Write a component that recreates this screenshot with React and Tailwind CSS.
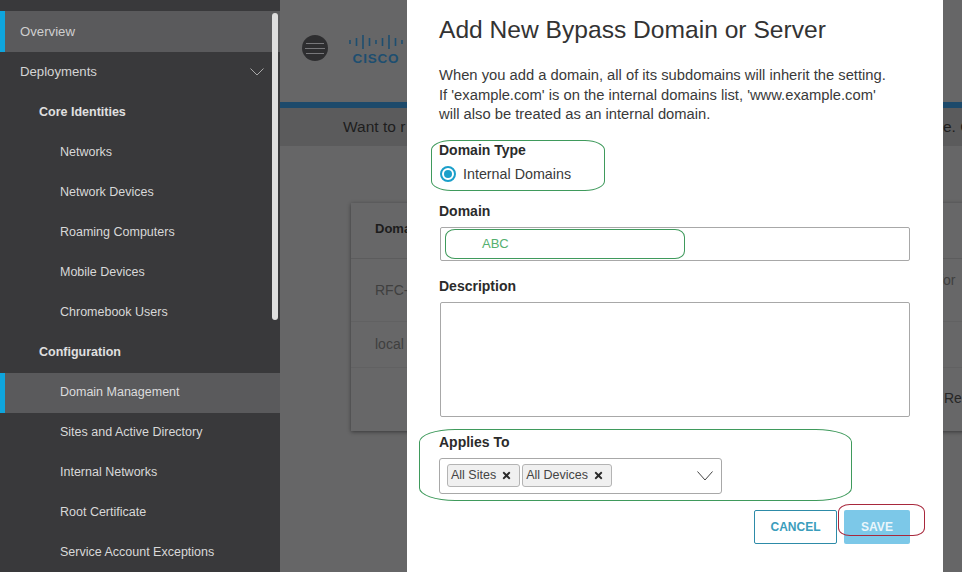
import { FaTimes } from 'react-icons/fa'

const font = { sans: 'font-["Liberation_Sans",Arial,sans-serif]' }

const configItems = ['Sites and Active Directory', 'Internal Networks', 'Root Certificate', 'Service Account Exceptions']
const identityItems = ['Networks', 'Network Devices', 'Roaming Computers', 'Mobile Devices', 'Chromebook Users']

function SubItem({ children }) {
  return <div className="flex h-10 items-center pl-[60px] text-[12.5px] text-[#d8d8d8]">{children}</div>
}

function GroupTitle({ children }) {
  return <div className="flex h-10 items-center pl-[39px] text-[12.5px] font-bold text-[#e0e0e0]">{children}</div>
}

function Sidebar() {
  return (
    <aside className="relative h-full w-[280px] shrink-0 overflow-hidden bg-[#39393b] pt-[11px]">
      <div className="flex h-[41px] items-center border-l-[5px] border-[#0ea5dd] bg-[#5a5a5c] pl-[15px] text-[13.2px] text-[#cfcfcf]">Overview</div>
      <div className="flex h-10 items-center justify-between pl-5 pr-[16px] text-[13.2px] text-[#d4d4d4]">
        <span>Deployments</span>
        <svg width="14" height="8" viewBox="0 0 14 8" fill="none" stroke="#a8a8a8" strokeWidth="1">
          <path d="M0.5 0.5 7 7 13.5 0.5" />
        </svg>
      </div>
      <GroupTitle>Core Identities</GroupTitle>
      {identityItems.map(i => <SubItem key={i}>{i}</SubItem>)}
      <GroupTitle>Configuration</GroupTitle>
      <div className="mb-[-1px] mt-px flex h-10 items-center border-l-[5px] border-[#0ea5dd] bg-[#5a5a5c] pb-[2px] pl-[55px] text-[12.5px] text-[#dcdcdc]">Domain Management</div>
      {configItems.map(i => <SubItem key={i}>{i}</SubItem>)}
      {/* scrollbar */}
      <div className="absolute left-[272px] top-[13px] h-[307px] w-[6px] rounded-full bg-[#dedede]" />
    </aside>
  )
}

function CiscoLogo() {
  const bars = [4, 8, 14, 8, 4, 8, 14, 8, 4]
  return (
    <div className="flex w-[56px] flex-col items-center">
      <svg width="56" height="14" viewBox="0 0 56 14" stroke="#1d4e70" strokeWidth="1.6">
        {bars.map((h, i) => <line key={i} x1={2 + i * 6.5} x2={2 + i * 6.5} y1={7 - h / 2} y2={7 + h / 2} />)}
      </svg>
      <span className="mt-[3px] text-[13.5px] font-bold leading-[13px] tracking-[0.8px] text-[#1d4e70]">CISCO</span>
    </div>
  )
}

function MainBackdrop() {
  return (
    <main className="h-full min-w-0 flex-1 overflow-hidden bg-[#666667]">
      <div className="flex h-[102px] items-start pl-[22px] pt-[35px]">
        <div className="flex h-[26px] w-[26px] flex-col items-center justify-center gap-[4px] rounded-full bg-[#2e2e30]">
          <span className="h-px w-[18px] bg-[#77777a]" />
          <span className="h-px w-[20px] bg-[#77777a]" />
          <span className="h-px w-[18px] bg-[#77777a]" />
        </div>
        <div className="ml-[20px]"><CiscoLogo /></div>
      </div>
      <div className="h-[6px] bg-[#1d4a6b]" />
      <div className="flex h-[38px] w-[700px] items-center bg-[#5b5b5c] pl-[63px] text-[15.5px] text-[#1e1e1e]">
        <span className="w-[600px] shrink-0">Want to r</span>
        <span className="shrink-0">e. C</span>
      </div>
      <div className="ml-[71px] mt-[57px] h-[228px] w-[700px] bg-[#676768] shadow-[0_1px_4px_rgba(0,0,0,0.45)]">
        <div className="flex h-[56px] items-center border-b border-[#5c5c5d] pb-[4px] pl-6 text-[13px] font-bold text-[#1c1c1c]">Domain</div>
        <div className="flex h-[63px] items-center border-b border-[#616162] pl-6 text-[14px] text-[#3f3f3f]">
          <span className="w-[564px] shrink-0">RFC-1918</span>
          <span className="mb-[19px]">for</span>
        </div>
        <div className="flex h-[46px] items-center border-b border-[#616162] pl-6 text-[14px] text-[#3f3f3f]">local</div>
        <div className="flex h-[62px] items-center pb-[2px] pl-[593px] text-[14px] text-[#262626]">Re</div>
      </div>
    </main>
  )
}

function FieldLabel({ children, className = '' }) {
  return <div className={`text-[14px] font-bold leading-[18px] text-[#2b2b2b] ${className}`}>{children}</div>
}

function Chip({ label }) {
  return (
    <span className="flex h-[23px] items-center gap-[5px] rounded-[3px] border border-[#b4b4b4] bg-[#f0f0f0] pl-[3px] pr-[7px] text-[12.5px] text-[#444]">
      {label}
      <FaTimes size={11} className="text-[#2b2b2b]" />
    </span>
  )
}

function Modal() {
  return (
    <div className="absolute left-[407px] top-0 h-[572px] w-[536px] overflow-hidden bg-white pl-[32px] pr-[33px] pt-[15px] text-[#333]">
      <h1 className="text-[24.6px] font-normal leading-[30px] text-[#333]">Add New Bypass Domain or Server</h1>
      <p className="mt-[21px] text-[14.75px] leading-[19.5px] text-[#3a3a3a]">
        When you add a domain, all of its subdomains will inherit the setting.<br />
        If 'example.com' is on the internal domains list, 'www.example.com'<br />
        will also be treated as an internal domain.
      </p>

      <FieldLabel className="mt-[16px]">Domain Type</FieldLabel>
      <div className="mt-[6px] flex h-[18px] items-center">
        <span className="ml-px flex h-4 w-4 items-center justify-center rounded-full border-2 border-[#1b9fca] bg-white">
          <span className="h-2 w-2 rounded-full bg-[#1b9fca]" />
        </span>
        <span className="ml-[7px] mt-[2px] text-[14.3px] text-[#3a3a3a]">Internal Domains</span>
      </div>

      <FieldLabel className="mt-[19px]">Domain</FieldLabel>
      <div className="ml-px mt-[7px] flex h-[34px] items-center rounded-[2px] border border-[#a8a8a8] pl-[41px] text-[13px] text-[#55b06f]">ABC</div>

      <FieldLabel className="mt-[16px]">Description</FieldLabel>
      <div className="ml-px mt-[7px] h-[115px] rounded-[2px] border border-[#a8a8a8]" />

      <FieldLabel className="mt-[16px]">Applies To</FieldLabel>
      <div className="mt-[7px] flex h-[36px] w-[283px] items-center gap-[2px] rounded-[3px] border border-[#a8a8a8] pl-[7px] pr-[8px]">
        <Chip label="All Sites" />
        <Chip label="All Devices" />
        <svg className="ml-auto" width="16" height="10" viewBox="0 0 16 10" fill="none" stroke="#444" strokeWidth="1">
          <path d="M0.5 0.5 8 9 15.5 0.5" />
        </svg>
      </div>

      <div className="mt-[16px] flex justify-end gap-[7px]">
        <button className="h-[34px] w-[83px] rounded-[2px] border border-[#2d8ba8] bg-white text-[12px] font-bold text-[#3a9dbc]">CANCEL</button>
        <button className="h-[34px] w-[66px] rounded-[2px] bg-[#7cc8e8] text-[12px] font-bold text-[#eaf6fb]">SAVE</button>
      </div>

      {/* hand drawn marks on the screenshot */}
      <div className="absolute left-[24px] top-[140px] h-[51px] w-[174px] rounded-[20px/10px] border border-[#3f9a5c]" />
      <div className="absolute left-[38px] top-[229px] h-[30px] w-[240px] rounded-[10px/8px] border border-[#3f9a5c]" />
      <div className="absolute left-[12px] top-[429px] h-[72px] w-[433px] rounded-[36px/13px] border border-[#3f9a5c]" />
      <div className="absolute left-[431px] top-[504px] h-[32px] w-[87px] rounded-[12px/8px] border border-[#a8283c]" />
    </div>
  )
}

export default function App() {
  return (
    <div className={`relative flex h-[572px] w-[962px] overflow-hidden ${font.sans}`}>
      <Sidebar />
      <MainBackdrop />
      <Modal />
    </div>
  )
}
